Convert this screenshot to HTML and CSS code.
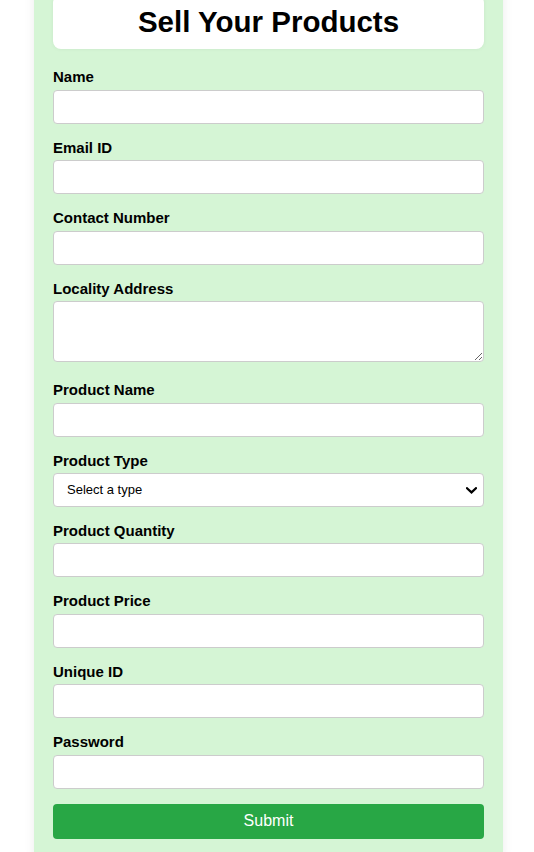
FILE: index.html
```html
<!DOCTYPE html>
<html lang="en">
<head>
<meta charset="utf-8">
<title>Sell Your Products</title>
<link rel="stylesheet" href="styles.css">
</head>
<body>
<div class="container">
  <div class="header">
    <h1 class="title">Sell Your Products</h1>
  </div>
  <form class="form">
    <label class="label" for="name">Name</label>
    <input class="field" id="name" type="text">
    <label class="label" for="email">Email ID</label>
    <input class="field" id="email" type="email">
    <label class="label" for="contact">Contact Number</label>
    <input class="field" id="contact" type="tel">
    <label class="label" for="address">Locality Address</label>
    <textarea class="field area" id="address"></textarea>
    <label class="label" for="pname">Product Name</label>
    <input class="field" id="pname" type="text">
    <label class="label" for="ptype">Product Type</label>
    <div class="select-wrap">
      <select class="field select" id="ptype">
        <option>Select a type</option>
      </select>
      <svg class="chevron" width="11" height="7" viewBox="0 0 11 7" aria-hidden="true">
        <path d="M1 1.2 L5.5 5.4 L10 1.2" fill="none" stroke="#000" stroke-width="2.2" stroke-linecap="square"/>
      </svg>
    </div>
    <label class="label" for="qty">Product Quantity</label>
    <input class="field" id="qty" type="number">
    <label class="label" for="price">Product Price</label>
    <input class="field" id="price" type="number">
    <label class="label" for="uid">Unique ID</label>
    <input class="field" id="uid" type="text">
    <label class="label" for="pw">Password</label>
    <input class="field" id="pw" type="password">
    <button class="submit" type="button">Submit</button>
  </form>
</div>
</body>
</html>
```
FILE: styles.css
```css
* { box-sizing: border-box; }
html, body { margin: 0; padding: 0; background: #ffffff; }
body { font-family: "Liberation Sans", Arial, sans-serif; color: #000; }
.container {
  width: 469px;
  margin: -25px 0 0 34px;
  padding: 20px 19px 20px;
  background: #d5f5d5;
  box-shadow: 0 0 10px rgba(0,0,0,0.08);
}
.header {
  background: #fff;
  border-radius: 8px;
  padding: 10px;
  margin-bottom: 19px;
  box-shadow: 0 0 4px rgba(0,0,0,0.06);
}
.title {
  margin: 0;
  text-align: center;
  font-size: 29.5px;
  font-weight: bold;
  line-height: 34px;
}
.form { display: flex; flex-direction: column; }
.label {
  display: block;
  font-size: 15px;
  font-weight: bold;
  line-height: 17px;
  margin-bottom: 4.5px;
}
.field {
  display: block;
  width: 100%;
  height: 34px;
  margin: 0 0 15px;
  padding: 8px;
  border: 1px solid #cccccc;
  border-radius: 4px;
  background: #fff;
  font-family: "Liberation Sans", Arial, sans-serif;
  font-size: 14px;
}
.area { height: 61px; margin-bottom: 19px; resize: vertical; }
.select-wrap { position: relative; }
.select {
  -webkit-appearance: none;
  appearance: none;
  height: 33.5px;
  padding: 0 30px 0 13px;
  font-size: 13px;
  color: #000;
}
.chevron {
  position: absolute;
  right: 7px;
  top: 13.5px;
  pointer-events: none;
}
.submit {
  display: block;
  width: 100%;
  height: 35px;
  border: none;
  border-radius: 4px;
  background: #28a745;
  color: #fff;
  font-family: "Liberation Sans", Arial, sans-serif;
  font-size: 16px;
}
```
